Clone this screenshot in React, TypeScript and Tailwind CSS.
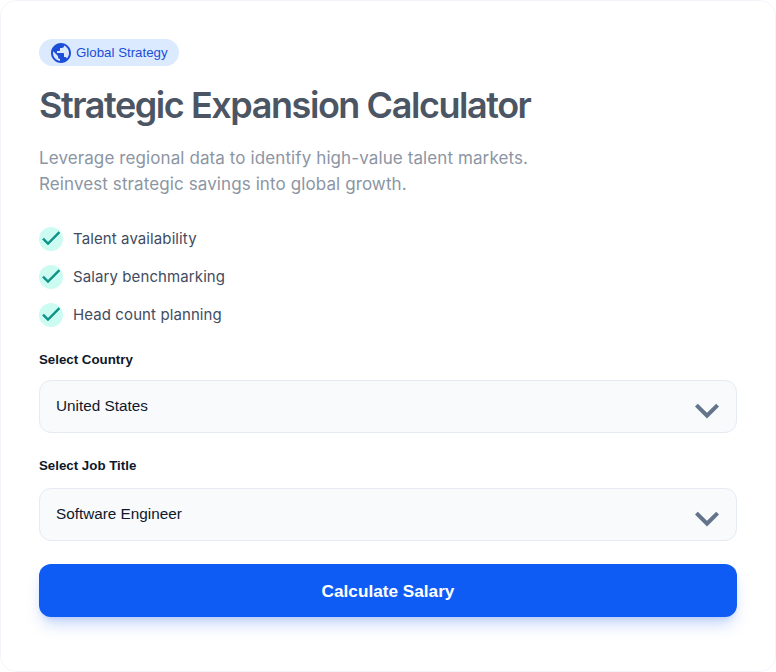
import { MdExpandMore, MdPublic } from "react-icons/md";

const features = ["Talent availability", "Salary benchmarking", "Head count planning"];

function CheckMark() {
  return (
    <svg className="h-6 w-6 -translate-y-px text-[#0d9488]" viewBox="0 0 24 24" fill="currentColor" stroke="currentColor" strokeWidth="0.5">
      <path d="M9 16.17 4.83 12l-1.42 1.41L9 19 21 7l-1.41-1.41z" />
    </svg>
  );
}

function SelectBox({ label, value, className, gapClass }: { label: string; value: string; className?: string; gapClass: string }) {
  return (
    <div className={className}>
      <div className="text-[13.3px] leading-4 font-bold text-[#0f172a] font-['Liberation_Sans',sans-serif]">{label}</div>
      <div className={`${gapClass} flex h-[53px] items-center justify-between rounded-xl border border-[#e5eaf3] bg-[#f8fafc] pl-4 pr-[5px]`}>
        <span className="text-[15.3px] text-[#0f172a] font-['Liberation_Sans',sans-serif]">{value}</span>
        <MdExpandMore className="h-12 w-12 shrink-0 translate-y-[3.5px] text-[#64748b]" />
      </div>
    </div>
  );
}

export default function App() {
  return (
    <div className="h-[672px] w-[776px] bg-white font-['Inter',sans-serif]">
      <div className="h-full rounded-2xl border border-[#f1f5f9] bg-white px-[38px] pt-[38px]">
        <div className="flex h-[27px] w-[140px] items-center gap-[3px] rounded-full bg-[#dbeafe] pl-[10px]">
          <MdPublic className="h-6 w-6 text-[#1d4ed8]" />
          <span className="text-[13.3px] text-[#1d4ed8] font-['Liberation_Sans',sans-serif]">Global Strategy</span>
        </div>
        <h1 className="mt-[17px] text-[36px] leading-[45px] font-semibold tracking-[-1.44px] text-[#4b5563]">Strategic Expansion Calculator</h1>
        <p className="mt-[17px] text-[17px] leading-[26px] tracking-[0.1px] text-[#8b95a3]">
          Leverage regional data to identify high-value talent markets.
          <br />
          Reinvest strategic savings into global growth.
        </p>
        <ul className="mt-[30px] flex flex-col gap-[14px]">
          {features.map((item) => (
            <li key={item} className="flex h-6 items-center gap-[10px]">
              <span className="flex h-6 w-6 items-center justify-center rounded-full bg-[#ccfbf1]">
                <CheckMark />
              </span>
              <span className="pt-px text-[15px] tracking-[0.1px] text-[#3f4c61]">{item}</span>
            </li>
          ))}
        </ul>
        <SelectBox className="mt-[25px]" gapClass="mt-3" label="Select Country" value="United States" />
        <SelectBox className="mt-[25px]" gapClass="mt-[14px]" label="Select Job Title" value="Software Engineer" />
        <button className="mt-[23px] h-[53px] w-full rounded-xl bg-[#0f5cf4] pt-[3px] text-[17.2px] font-bold text-white shadow-[0_10px_15px_-3px_rgba(37,99,235,0.25),0_4px_6px_-4px_rgba(37,99,235,0.25)] font-['Liberation_Sans',sans-serif]">
          Calculate Salary
        </button>
      </div>
    </div>
  );
}
